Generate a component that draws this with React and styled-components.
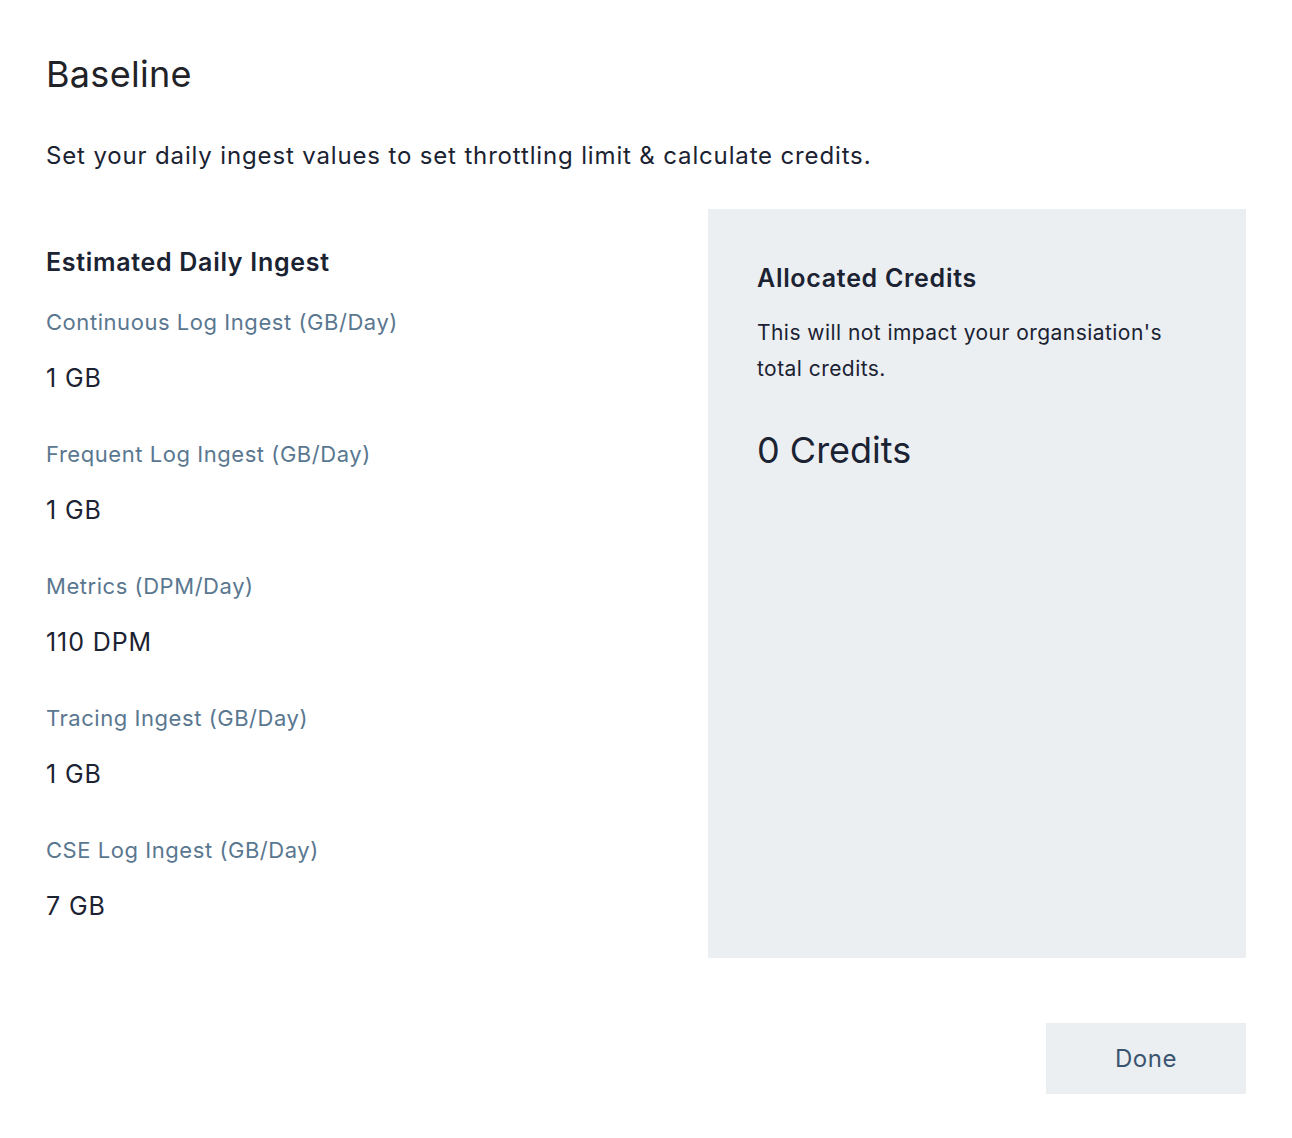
import React from 'react';
import styled, { createGlobalStyle } from 'styled-components';

const GlobalStyle = createGlobalStyle`
    body {
        margin: 0;
        background: #ffffff;
        font-family: Inter, "Noto Sans", sans-serif;
        color: #1b2232;
    }
`;

const ingestRows = [
    { label: 'Continuous Log Ingest (GB/Day)', value: '1 GB' },
    { label: 'Frequent Log Ingest (GB/Day)', value: '1 GB' },
    { label: 'Metrics (DPM/Day)', value: '110 DPM' },
    { label: 'Tracing Ingest (GB/Day)', value: '1 GB' },
    { label: 'CSE Log Ingest (GB/Day)', value: '7 GB' },
];

function App() {
    return (
        <>
            <GlobalStyle />
            <Page>
                <Title>Baseline</Title>
                <Subtitle>Set your daily ingest values to set throttling limit &amp; calculate credits.</Subtitle>
                <Body>
                    <IngestColumn>
                        <SectionHeading>Estimated Daily Ingest</SectionHeading>
                        {ingestRows.map((row, index) => (
                            <Field key={index}>
                                <FieldLabel>{row.label}</FieldLabel>
                                <FieldValue>{row.value}</FieldValue>
                            </Field>
                        ))}
                    </IngestColumn>
                    <CreditsPanel>
                        <SectionHeading>Allocated Credits</SectionHeading>
                        <PanelText>This will not impact your organsiation's total credits.</PanelText>
                        <CreditsValue>0 Credits</CreditsValue>
                    </CreditsPanel>
                </Body>
                <Footer>
                    <DoneButton>Done</DoneButton>
                </Footer>
            </Page>
        </>
    );
}

const Page = styled.div`
    padding: 50px 46px 44px 46px;
    box-sizing: border-box;
    width: 1292px;
`;

const Title = styled.h1`
    margin: 0;
    font-size: 36px;
    line-height: 48px;
    font-weight: 400;
    letter-spacing: 0.3px;
    color: #1f2328;
`;

const Subtitle = styled.p`
    margin: 42px 0 0 0;
    font-size: 24px;
    line-height: 32px;
    letter-spacing: 0.85px;
    color: #1b2232;
`;

const Body = styled.div`
    margin-top: 37px;
    display: grid;
    grid-template-columns: 1fr 538px;
    gap: 48px;
`;

const IngestColumn = styled.div`
    padding: 37px 0 36px 0;
    display: flex;
    flex-direction: column;
`;

const SectionHeading = styled.h2`
    margin: 0;
    font-size: 25px;
    line-height: 32px;
    font-weight: 600;
    letter-spacing: 0.7px;
    color: #1b2232;
`;

const Field = styled.div`
    display: flex;
    flex-direction: column;
    margin-top: 29px;
    & + & {
        margin-top: 45px;
    }
`;

const FieldLabel = styled.label`
    font-size: 22px;
    line-height: 30px;
    letter-spacing: 0.55px;
    color: #5a7790;
`;

const FieldValue = styled.div`
    margin-top: 25px;
    font-size: 25px;
    line-height: 32px;
    letter-spacing: 0.9px;
    color: #1b2232;
`;

const CreditsPanel = styled.div`
    background: #ebeff2;
    padding: 53px 49px 40px 49px;
    display: flex;
    flex-direction: column;
`;

const PanelText = styled.p`
    margin: 21px 0 0 0;
    font-size: 21px;
    line-height: 36px;
    letter-spacing: 0.45px;
    color: #1b2232;
    max-width: 430px;
`;

const CreditsValue = styled.div`
    margin-top: 39px;
    font-size: 36px;
    line-height: 48px;
    color: #1b2232;
`;

const Footer = styled.div`
    margin-top: 65px;
    display: flex;
    justify-content: flex-end;
`;

const DoneButton = styled.button`
    width: 200px;
    height: 71px;
    border: none;
    background: #ebeff2;
    color: #3b5571;
    font-family: inherit;
    font-size: 24px;
    letter-spacing: 0.5px;
    cursor: pointer;
`;

export default App;
